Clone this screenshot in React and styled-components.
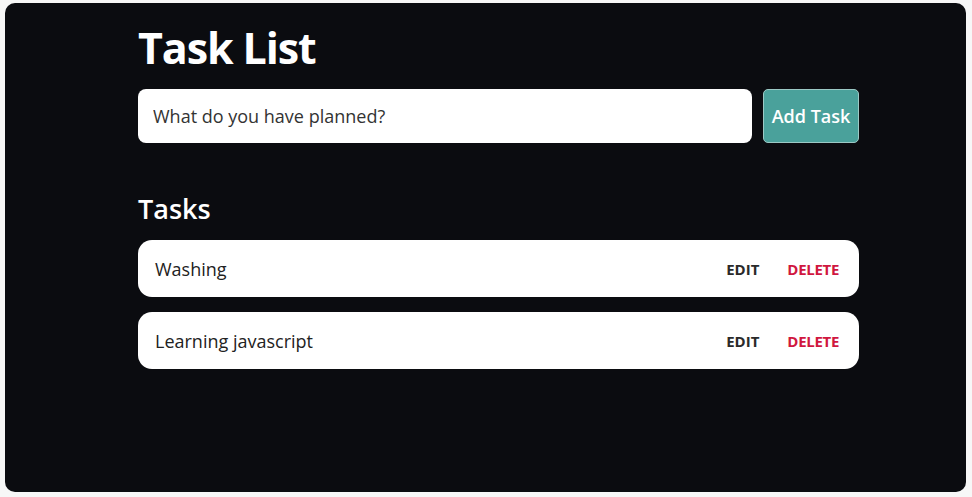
import React, { useState } from 'react'
import styled, { createGlobalStyle } from 'styled-components';

const GlobalStyle = createGlobalStyle`
  body {
    margin: 0;
    background: #f7f7f7;
    font-family: "Open Sans", "Noto Sans", sans-serif;
  }
`;

const Panel = styled.div`
  box-sizing: border-box;
  margin: 3px 6px 0 5px;
  height: 489px;
  background: #0b0c10;
  border-radius: 10px;
  padding: 15px 0 0 133px;
`;

const Content = styled.div`
  width: 721px;
`;

const Title = styled.h1`
  margin: 0;
  color: #fff;
  font-size: 43px;
  font-weight: 700;
  line-height: 60px;
  letter-spacing: -1.1px;
`;

const TaskForm = styled.form`
  display: flex;
  gap: 11px;
  margin-top: 11px;
`;

const TaskInput = styled.input`
  flex: 1;
  height: 54px;
  box-sizing: border-box;
  border: none;
  border-radius: 8px;
  padding: 0 15px;
  font-family: inherit;
  font-size: 18px;
  color: #222;
  outline: none;
  &::placeholder {
    color: #333;
  }
`;

const AddButton = styled.button`
  width: 96px;
  height: 54px;
  box-sizing: border-box;
  background: #4aa19b;
  color: #fff;
  border: 1px solid #9cc9c5;
  border-radius: 5px;
  font-family: inherit;
  font-size: 18px;
  font-weight: 600;
  cursor: pointer;
`;

const SectionTitle = styled.h2`
  margin: 48px 0 0;
  color: #fff;
  font-size: 27px;
  font-weight: 600;
  line-height: 36px;
`;

const List = styled.div`
  display: flex;
  flex-direction: column;
  gap: 15px;
  margin-top: 13px;
`;

const Row = styled.div`
  display: flex;
  align-items: center;
  height: 57px;
  background: #fff;
  border-radius: 14px;
  padding: 0 20px 0 17px;
`;

const TaskName = styled.span`
  flex: 1;
  font-size: 18px;
  color: #222;
`;

const Action = styled.button`
  background: none;
  border: none;
  padding: 0;
  margin-left: ${(p) => (p.$danger ? '28px' : '0')};
  font-family: inherit;
  font-size: 15px;
  font-weight: 700;
  letter-spacing: ${(p) => (p.$danger ? '-0.3px' : '0')};
  color: ${(p) => (p.$danger ? '#d0173f' : '#2a2a2a')};
  cursor: pointer;
`;

function App() {
  const [tasks] = useState(["Washing", "Learning javascript"])
  const [text, setText] = useState("")

  return (
    <>
      <GlobalStyle />
      <Panel>
        <Content>
          <Title>Task List</Title>
          <TaskForm onSubmit={(e) => e.preventDefault()}>
            <TaskInput
              placeholder='What do you have planned?'
              value={text}
              onChange={(e) => setText(e.target.value)}
            />
            <AddButton type='submit'>Add Task</AddButton>
          </TaskForm>
          <SectionTitle>Tasks</SectionTitle>
          <List>
            {tasks.map((t) => (
              <Row key={t}>
                <TaskName>{t}</TaskName>
                <Action>EDIT</Action>
                <Action $danger>DELETE</Action>
              </Row>
            ))}
          </List>
        </Content>
      </Panel>
    </>
  )
}

export default App
